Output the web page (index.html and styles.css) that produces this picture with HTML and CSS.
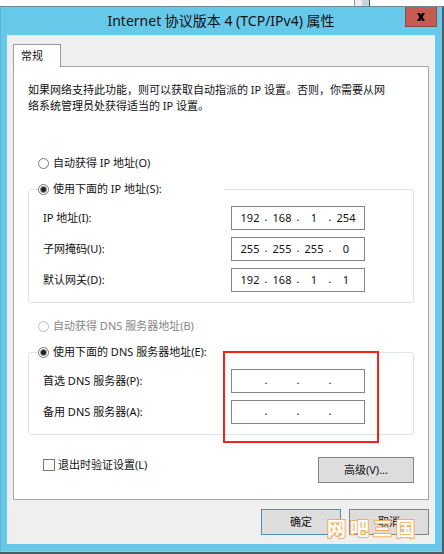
FILE: index.html
```html
<!DOCTYPE html>
<html lang="zh-CN">
<head>
    <meta charset="utf-8">
    <title>Internet 协议版本 4 (TCP/IPv4) 属性</title>
    <link rel="stylesheet" href="styles.css">
</head>
<body>
<div class="backdrop">
    <div class="backdrop-scroll"></div>
</div>

<div class="dialog">
    <header class="title-bar">
        <h1 class="title">Internet 协议版本 4 (TCP/IPv4) 属性</h1>
        <button class="close-button" type="button" aria-label="关闭">
            <svg class="close-icon" viewBox="0 0 8 8">
                <path d="M0 0h3l1 2 1-2h3L5.6 4 8 8H5L4 6 3 8H0l2.4-4z"/>
            </svg>
        </button>
    </header>

    <form class="client">
        <div class="tabs">
            <button class="tab" type="button">常规</button>
        </div>

        <div class="panel">
            <p class="intro">如果网络支持此功能，则可以获取自动指派的 IP 设置。否则，你需要从网络系统管理员处获得适当的 IP 设置。</p>

            <label class="choice"><input type="radio" name="ip">自动获得 IP 地址(O)</label>
            <fieldset class="group">
                <legend class="legend">
                    <label class="choice-inner"><input type="radio" name="ip" checked>使用下面的 IP 地址(S):</label>
                </legend>
                <div class="row">
                    <label for="ip1">IP 地址(I):</label>
                    <div class="address">
                        <input id="ip1" value="192"><span>.</span><input aria-label="IP 2" value="168"><span>.</span><input aria-label="IP 3" value="1"><span>.</span><input aria-label="IP 4" value="254">
                    </div>
                </div>
                <div class="row">
                    <label for="mask1">子网掩码(U):</label>
                    <div class="address">
                        <input id="mask1" value="255"><span>.</span><input aria-label="掩码 2" value="255"><span>.</span><input aria-label="掩码 3" value="255"><span>.</span><input aria-label="掩码 4" value="0">
                    </div>
                </div>
                <div class="row">
                    <label for="gw1">默认网关(D):</label>
                    <div class="address">
                        <input id="gw1" value="192"><span>.</span><input aria-label="网关 2" value="168"><span>.</span><input aria-label="网关 3" value="1"><span>.</span><input aria-label="网关 4" value="1">
                    </div>
                </div>
            </fieldset>

            <label class="choice disabled"><input type="radio" name="dns" disabled>自动获得 DNS 服务器地址(B)</label>
            <div class="dns">
                <fieldset class="group">
                    <legend class="legend legend-wide">
                        <label class="choice-inner"><input type="radio" name="dns" checked>使用下面的 DNS 服务器地址(E):</label>
                    </legend>
                    <div class="row">
                        <label for="dns1">首选 DNS 服务器(P):</label>
                        <div class="address">
                            <input id="dns1"><span>.</span><input aria-label="首选 2"><span>.</span><input aria-label="首选 3"><span>.</span><input aria-label="首选 4">
                        </div>
                    </div>
                    <div class="row">
                        <label for="alt1">备用 DNS 服务器(A):</label>
                        <div class="address">
                            <input id="alt1"><span>.</span><input aria-label="备用 2"><span>.</span><input aria-label="备用 3"><span>.</span><input aria-label="备用 4">
                        </div>
                    </div>
                </fieldset>
                <div class="highlight"></div>
            </div>

            <div class="panel-footer">
                <label class="validate"><input type="checkbox">退出时验证设置(L)</label>
                <button class="button advanced" type="button">高级(V)...</button>
            </div>
        </div>

        <div class="actions">
            <button class="button default" type="button">确定</button>
            <button class="button" type="button">取消</button>
            <span class="watermark">网吧三国</span>
        </div>
    </form>
</div>
</body>
</html>
```
FILE: styles.css
```css
* {
    margin: 0;
    padding: 0;
    box-sizing: border-box;
}

body {
    background: #4f5d63;
    color: #111;
    font-family: "Noto Sans", "Noto Sans CJK SC", sans-serif;
    font-size: 11px;
    line-height: 16px;
}

input,
button {
    font: inherit;
    color: inherit;
}

/* strip of the window behind the dialog */
.backdrop {
    height: 7px;
    background: #fff;
    border-bottom: 1px solid #6f8a94;
    padding-right: 74px;
}

.backdrop-scroll {
    width: 15px;
    height: 6px;
    margin-left: auto;
    background: #c3d5da;
    border-left: 7px solid #eee;
    border-right: 1px solid #555;
    box-shadow: -1px 0 #999;
}

.dialog {
    margin-right: 2px;
    padding: 0 7px 7px;
    background: #66c9ea;
    border-bottom: 1px solid #a9c3cc;
    box-shadow: inset 1px 0 #5bb5d2;
}

.title-bar {
    position: relative;
    height: 28px;
    display: flex;
    justify-content: center;
    align-items: center;
}

.title {
    font-size: 14px;
    font-weight: 400;
    line-height: 28px;
}

.close-button {
    position: absolute;
    top: 0;
    right: -2px;
    width: 32px;
    height: 20px;
    display: flex;
    justify-content: center;
    align-items: center;
    background: #c45c54;
    border: 1px solid #8c4a48;
    border-top: 0;
}

.close-icon {
    width: 8px;
    height: 8px;
    fill: #000;
}

.client {
    padding: 9px 6px;
    background: #efefef;
    box-shadow: inset 0 1px #d5e8ee;
}

.tabs {
    display: flex;
    height: 22px;
}

.tab {
    position: relative;
    z-index: 1;
    width: 48px;
    height: 23px;
    background: #fff;
    border: 1px solid #9a9aa4;
    border-bottom: 0;
    padding-right: 10px;
}

.panel {
    background: #fff;
    border: 1px solid #a5a5ae;
    padding: 15px 14px 16px;
}

.intro {
    margin-bottom: 41px;
    padding-right: 20px;
}

.choice,
.choice-inner,
.validate {
    display: flex;
    align-items: center;
    height: 16px;
}

.choice {
    margin: 0 0 10px 10px;
}

.disabled {
    color: #858585;
}

input[type="radio"] {
    appearance: none;
    width: 11px;
    height: 11px;
    margin-right: 4px;
    border: 1px solid #777;
    border-radius: 50%;
    background: #fff;
}

input[type="radio"]:checked {
    background: radial-gradient(circle, #222 2px, #fff 4px);
}

input[type="radio"]:disabled {
    border-color: #bbb;
}

.group {
    display: block;
    min-width: 0;
    border: 1px solid #dce5ea;
    border-radius: 3px;
    padding: 9px 48px 10px 14px;
}

.legend {
    width: 186px;
    margin-left: -5px;
}

.legend-wide {
    width: 229px;
}

.row {
    display: flex;
    justify-content: space-between;
    align-items: center;
}

.row + .row {
    margin-top: 7px;
}

.address {
    display: flex;
    align-items: center;
    width: 134px;
    height: 24px;
    padding: 0 4px 2px;
    background: #fff;
    border: 1px solid #848484;
}

.address input {
    width: 28px;
    height: 18px;
    border: 0;
    background: none;
    text-align: center;
}

.address span {
    width: 4px;
    text-align: center;
}

.dns {
    position: relative;
}

.group + .choice {
    margin-top: 15px;
}

/* red callout around the DNS fields */
.highlight {
    position: absolute;
    top: 7px;
    right: 35px;
    bottom: -8px;
    width: 156px;
    border: 2px solid #fb2114;
    pointer-events: none;
}

.panel-footer {
    display: flex;
    justify-content: space-between;
    align-items: flex-start;
    margin-top: 22px;
    padding-left: 15px;
}

input[type="checkbox"] {
    appearance: none;
    width: 12px;
    height: 12px;
    margin-right: 3px;
    border: 1px solid #777;
    background: #fff;
}

.button {
    width: 80px;
    height: 26px;
    background: #ddd;
    border: 1px solid #858585;
}

.advanced {
    width: 96px;
}

.default {
    border-color: #4c8fbe;
}

.actions {
    position: relative;
    display: flex;
    justify-content: flex-end;
    gap: 8px;
    margin-top: 9px;
}

.watermark {
    position: absolute;
    right: 10px;
    bottom: -6px;
    color: #fff;
    font-size: 19px;
    font-weight: 700;
    line-height: 24px;
    letter-spacing: 4px;
    -webkit-text-stroke: 2px #f2a94c;
    paint-order: stroke fill;
    text-shadow: 0 0 2px #f7c37c;
    pointer-events: none;
}
```
